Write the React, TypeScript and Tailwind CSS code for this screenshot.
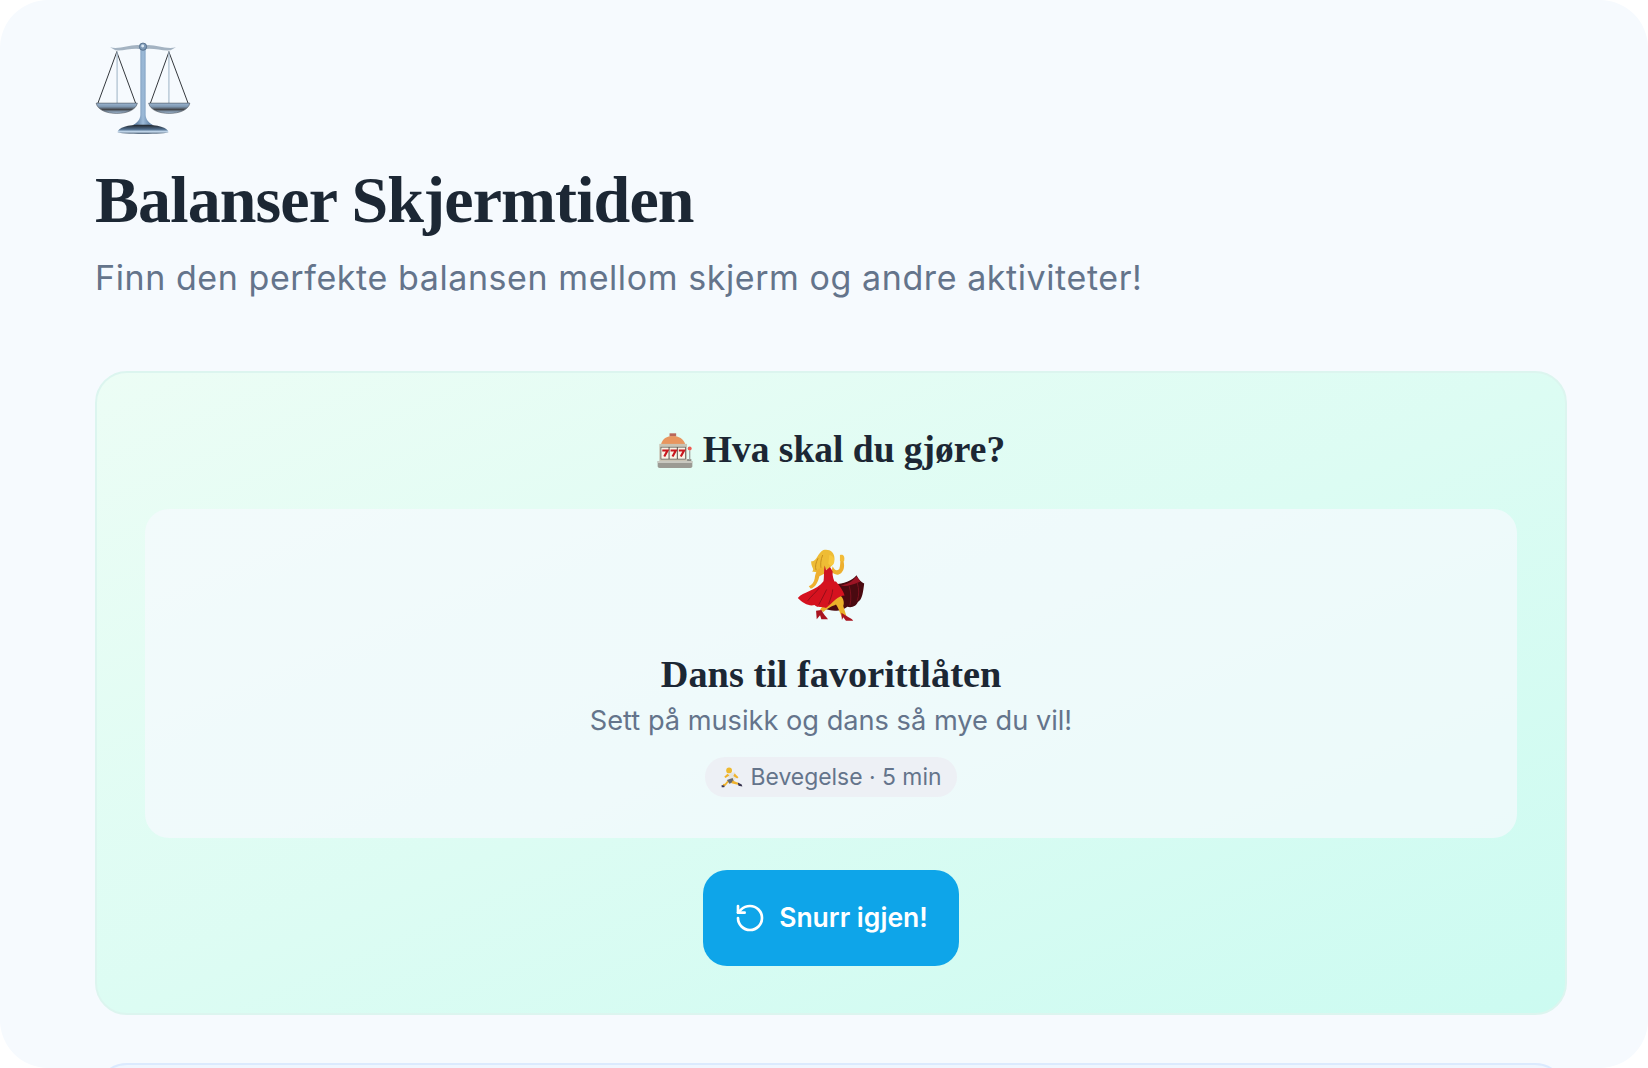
import React from 'react';
import { RotateCcw } from 'lucide-react';

const serif = "font-['Liberation_Serif',serif]";

// Drawn in the reference's 3x crop coordinates, so the numbers can be compared directly
const ScalesEmoji = () => (
  <svg width="96" height="93" viewBox="285 125 288 280">
    <defs>
      <linearGradient id="pan" x1="0" y1="0" x2="0" y2="1">
        <stop offset="0" stopColor="#9db7d2" />
        <stop offset="0.35" stopColor="#7d96b0" />
        <stop offset="0.62" stopColor="#45474b" />
        <stop offset="0.8" stopColor="#7c8fa2" />
        <stop offset="1" stopColor="#a4bdd6" />
      </linearGradient>
      <linearGradient id="post" x1="0" y1="0" x2="1" y2="0">
        <stop offset="0" stopColor="#3f5f84" />
        <stop offset="0.5" stopColor="#9dbbd9" />
        <stop offset="1" stopColor="#46688e" />
      </linearGradient>
      <linearGradient id="foot" x1="0" y1="0" x2="0" y2="1">
        <stop offset="0" stopColor="#1f2328" />
        <stop offset="0.5" stopColor="#4f6d8d" />
        <stop offset="0.75" stopColor="#c6dbef" />
        <stop offset="1" stopColor="#4a5c70" />
      </linearGradient>
    </defs>
    <path d="M330 141 C360 150 395 128 428 136 C462 128 496 150 528 141 L512 150 C480 152 455 140 428 148 C402 140 376 152 346 150 Z" fill="#a4b3c2" />
    <g fill="none" strokeLinecap="round">
      <path d="M350 155 L293 310 M350 155 L407 310 M507 155 L451 310 M507 155 L565 310" stroke="#33373c" strokeWidth="3" />
      <path d="M351 155 L351 310 M507 155 L507 310" stroke="#a9bccd" strokeWidth="3.5" />
    </g>
    <path d="M288 309 H412 C408 330 380 340 350 340 C320 340 292 330 288 309 Z" fill="url(#pan)" stroke="#2f353d" strokeWidth="1.5" />
    <path d="M446 309 H570 C566 330 538 340 508 340 C478 340 450 330 446 309 Z" fill="url(#pan)" stroke="#2f353d" strokeWidth="1.5" />
    <path d="M421 148 H437 L437 345 C438 360 446 368 462 377 H396 C412 368 420 360 421 345 Z" fill="url(#post)" />
    <circle cx="429" cy="139" r="11" fill="#7f9ab6" stroke="#3f5a78" strokeWidth="2" />
    <circle cx="428" cy="137" r="4.5" fill="#dbe8f4" />
    <path d="M352 396 C356 382 380 374 428 374 C476 374 502 382 506 396 C506 404 352 404 352 396 Z" fill="url(#foot)" />
  </svg>
);

const SlotEmoji = () => (
  <svg width="37" height="37" viewBox="110 64 112 112" className="shrink-0">
    <path d="M148 68 H168 V78 H148 Z" fill="#b9675a" />
    <path d="M122 102 C126 84 140 76 158 76 C176 76 190 84 196 102 Z" fill="#e8965f" />
    <path d="M117 100 H201 V152 H117 Z" fill="#c9c3b4" />
    <path d="M121 109 H197 V147 H121 Z" fill="#56514a" />
    <g fill="#f8f3e6">
      <rect x="123" y="111" width="22" height="34" />
      <rect x="148" y="111" width="22" height="34" />
      <rect x="173" y="111" width="22" height="34" />
    </g>
    <g fill="none" stroke="#c8171d" strokeWidth="6.5" strokeLinejoin="miter">
      <path d="M126 120 H142 L132 138" />
      <path d="M151 120 H167 L157 138" />
      <path d="M176 120 H192 L182 138" />
    </g>
    <path d="M201 146 H214 V152 H201 Z" fill="#8b8b86" />
    <path d="M207 120 H211 V148 H207 Z" fill="#a6a6a0" />
    <circle cx="209" cy="114" r="6" fill="#ee5a52" />
    <path d="M112 152 H217 V168 C217 172 214 173 211 173 H118 C115 173 112 172 112 168 Z" fill="#9b9a93" />
    <path d="M112 152 H217 V158 H112 Z" fill="#c9c8c0" />
  </svg>
);

const DancerEmoji = () => (
  <svg width="70" height="73" viewBox="530 418 210 220">
    {/* hair */}
    <path d="M612 421 C632 416 648 430 645 450 C642 468 632 476 622 480 C612 490 594 490 578 486 C588 478 572 470 576 454 C590 460 594 430 612 421 Z" fill="#eebc35" />
    <path d="M596 446 C590 458 586 470 590 482 M610 436 C604 450 602 466 606 480" stroke="#c98f1e" strokeWidth="3" fill="none" />
    <path d="M630 436 C642 438 648 448 644 460 C640 470 632 470 627 462 Z" fill="#f7c93f" />
    {/* arms */}
    <path d="M612 474 C598 472 588 486 586 506 C584 518 578 526 568 530 L574 538 C590 532 596 516 600 500 L616 492 Z" fill="#eeb02f" />
    <path d="M640 470 C646 482 652 486 660 478 C664 468 662 456 664 450 L672 452 C676 466 676 480 666 490 C654 500 644 494 636 486 Z" fill="#eeb02f" />
    <path d="M662 436 C672 432 678 440 674 456 L662 454 Z" fill="#f2bc37" />
    {/* skirt back, scalloped dark underside */}
    <path d="M646 524 C672 524 698 514 712 497 C718 510 726 518 735 522 C732 545 730 570 716 578 C712 590 698 596 684 592 C672 604 640 610 612 596 Z" fill="#4a0a10" />
    <path d="M712 500 C700 516 684 524 664 528 C680 532 696 528 724 516 Z" fill="#9c1424" />
    <path d="M690 530 C696 550 696 570 692 588 M714 520 C720 540 720 556 714 574" stroke="#7a101c" strokeWidth="3" fill="none" />
    {/* legs */}
    <path d="M644 552 C668 552 678 574 672 590 L682 622 L668 624 C660 606 656 592 650 585 C640 590 622 596 612 608 L602 602 C610 586 628 574 640 566 Z" fill="#eab02a" />
    {/* shoes */}
    <path d="M590 604 L606 602 C612 614 620 622 626 630 L606 630 L602 618 L592 630 Z" fill="#a9141f" />
    <path d="M666 610 L682 620 C690 626 698 628 702 634 L680 634 L672 624 L668 632 Z" fill="#a9141f" />
    {/* bodice + skirt front */}
    <path d="M616 468 L620 482 L632 472 L640 486 C638 500 644 512 648 524 L610 526 C616 510 612 490 616 468 Z" fill="#cf1122" />
    <path d="M612 516 L650 516 C662 530 672 545 676 558 C656 558 640 580 620 596 C606 590 596 598 585 587 C570 592 550 582 535 566 C550 546 592 544 612 516 Z" fill="#d5121f" />
    <path d="M600 535 C590 548 575 560 565 574 M622 540 C615 555 606 570 598 586 M640 540 C640 552 634 566 628 584" stroke="#940e19" strokeWidth="3" fill="none" />
  </svg>
);

const RunnerEmoji = () => (
  <svg width="22" height="22" viewBox="362 375 68 68" className="shrink-0">
    <circle cx="387" cy="389" r="9" fill="#eeb92f" />
    <path d="M384 398 L405 394 L412 410 L398 424 L386 418 Z" fill="#e4e4e1" />
    <path d="M380 418 L398 412 L402 424 L388 430 Z" fill="#6a6a6a" />
    <path d="M385 425 L376 436 L368 437 L368 431 L374 430 L382 420 Z" fill="#f0b32c" />
    <path d="M398 420 L418 428 L417 434 L394 428 Z" fill="#f0b32c" />
    <path d="M404 398 L416 410 L412 414 L400 406 Z" fill="#f0b32c" />
    <path d="M382 399 L372 408 L376 412 L388 404 Z" fill="#f0b32c" />
    <path d="M364 434 L374 436 L372 441 L364 441 Z M414 426 L426 432 L428 438 L416 436 Z" fill="#3a3550" />
  </svg>
);

const App: React.FC = () => {
  return (
    <div className="h-[1068px] overflow-hidden bg-white font-['Inter',sans-serif]">
      <div className="h-full overflow-hidden rounded-[48px] bg-[#f6fafe] pt-[42px] pr-[81px] pl-[95px]">
        {/* Header */}
        <ScalesEmoji />
        <h1 className={`${serif} mt-[25px] text-[66px] leading-[80px] font-bold tracking-[-0.9px] text-[#1c2734]`}>
          Balanser Skjermtiden
        </h1>
        <p className="mt-[14px] text-[34px] leading-[48px] tracking-[0.58px] text-[#64748b]">
          Finn den perfekte balansen mellom skjerm og andre aktiviteter!
        </p>

        {/* Spinner card */}
        <div className="mt-[69px] flex h-[644px] flex-col items-center rounded-[32px] border-2 border-[#dcf5ef] bg-linear-to-br from-[#ecfdf5] to-[#ccfbf1] px-[48px] pt-[50px]">
          <h2 className={`${serif} flex h-[54px] items-center gap-[9px] text-[37.5px] font-bold text-[#1c2734]`}>
            <SlotEmoji />
            Hva skal du gjøre?
          </h2>
          <div className="mt-[32px] flex h-[329px] w-full flex-col items-center rounded-[24px] bg-[#f6fafe]/70 pt-[40px]">
            <DancerEmoji />
            <h3 className={`${serif} mt-[29px] text-[38.3px] leading-[46px] font-bold text-[#1c2734]`}>
              Dans til favorittlåten
            </h3>
            <p className="mt-[3px] text-[27.2px] leading-[42px] text-[#64748b]">Sett på musikk og dans så mye du vil!</p>
            <div className="mt-[15px] flex h-[40px] items-center gap-[8px] rounded-full bg-[#edf0f5] px-[16px] text-[22.9px] text-[#64748b]">
              <RunnerEmoji />
              Bevegelse · 5 min
            </div>
          </div>
          <button className="mt-[32px] flex h-[96px] w-[256px] items-center justify-center gap-[13px] rounded-[24px] bg-[#0ea5e9] text-[26.5px] font-semibold text-white">
            <RotateCcw size={32} />
            Snurr igjen!
          </button>
        </div>

        {/* Next card, cut off by the window */}
        <div className="mt-[48px] h-[200px] rounded-[32px] border-2 border-[#dbeafe] bg-[#eff6ff]" />
      </div>
    </div>
  );
};

export default App;
